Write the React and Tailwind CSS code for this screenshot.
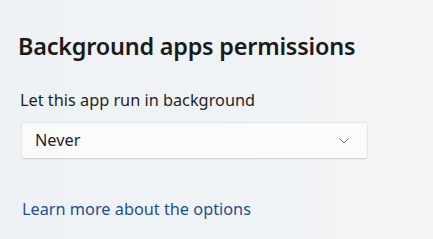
export default function App() {
  return (
    <div
      className="w-[433px] h-[239px] overflow-hidden bg-gradient-to-r from-[#eef2f6] to-[#f2f4f5] text-[#1b1b1b]"
      style={{ fontFamily: '"Noto Sans", "Open Sans", sans-serif' }}
    >
      <div className="pl-[18px] pt-[30px]">
        <h2 className="text-[23.4px] leading-[32px] font-semibold text-[#1a1a1a] tracking-[-0.2px]">
          Background apps permissions
        </h2>
        <div className="mt-[27px] pl-[2px] text-[16.3px] leading-[22px] text-[#1f1f1f]">
          Let this app run in background
        </div>
        <div className="mt-[11px] ml-[3px] w-[347px] h-[37px] flex items-center justify-between rounded-[4px] bg-[#fbfbfb] border border-[#e3e5e7] border-b-[#d0d2d4] pl-[13px] pr-[18px] text-[16.3px] text-[#1f1f1f] shadow-[0_1px_1px_rgba(0,0,0,0.03)]">
          <span>Never</span>
          <svg width="10" height="6" viewBox="0 0 10 6" fill="none">
            <path d="M1 1l4 4 4-4" stroke="#6b6b6b" strokeWidth="1" strokeLinecap="round" strokeLinejoin="round" />
          </svg>
        </div>
        <div className="mt-[39px] pl-[4px] text-[16.3px] leading-[22px] text-[#1d4f8f]">
          Learn more about the options
        </div>
      </div>
    </div>
  );
}
